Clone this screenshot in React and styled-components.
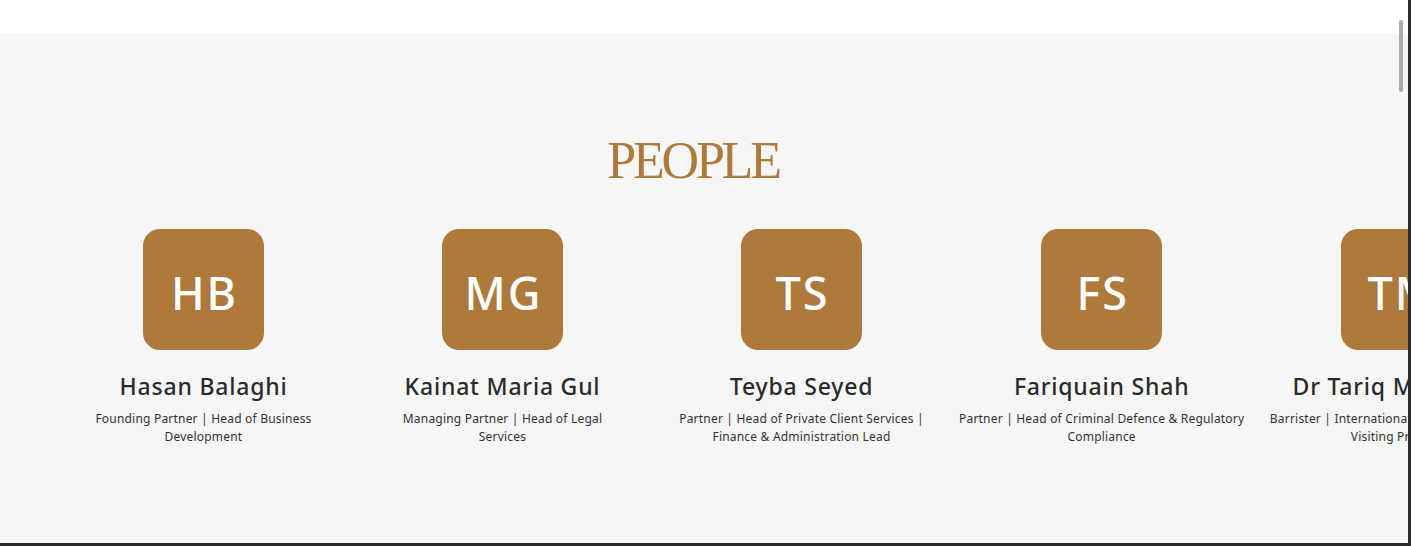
import React from 'react';
import styled, { createGlobalStyle } from 'styled-components';

const GlobalStyle = createGlobalStyle`
  html, body {
    margin: 0;
    padding: 0;
    background: #2b2b2b;
    overflow: hidden;
  }
`;

const Frame = styled.div`
  position: relative;
  width: 1408px;
  height: 543px;
  background: #ffffff;
  overflow: hidden;
  display: flex;
  flex-direction: column;
`;

const TopBar = styled.div`
  height: 34px;
  background: #ffffff;
  flex-shrink: 0;
`;

const Section = styled.section`
  flex: 1;
  background: #f6f6f6;
  padding-top: 97px;
`;

const Title = styled.h2`
  margin: 0 0 38px;
  padding-right: 22px;
  text-align: center;
  font-family: "Liberation Serif", serif;
  font-weight: 400;
  font-size: 52px;
  line-height: 60px;
  letter-spacing: -3.2px;
  color: #ad7a3b;
`;

const Track = styled.div`
  display: flex;
  padding-left: 54px;
  overflow: hidden;
`;

const Card = styled.div`
  flex: 0 0 299px;
  display: flex;
  flex-direction: column;
  align-items: center;
  padding: 0 8px;
  box-sizing: border-box;
  font-family: "Noto Sans", sans-serif;
`;

const Avatar = styled.div`
  width: 121px;
  height: 121px;
  box-sizing: border-box;
  padding-top: 5px;
  border-radius: 17px;
  background: #ad7a3b;
  color: #ffffff;
  display: flex;
  align-items: center;
  justify-content: center;
  font-size: 45px;
  font-weight: 500;
  letter-spacing: 2px;
  text-indent: 2px;
`;

const Name = styled.h3`
  margin: 22px 0 10px;
  font-size: 23px;
  line-height: 28px;
  font-weight: 500;
  letter-spacing: 0.8px;
  color: #2a2a2a;
  white-space: nowrap;
`;

const Role = styled.p`
  margin: 0;
  font-size: 12px;
  line-height: 18px;
  color: #333333;
  text-align: center;
  letter-spacing: 0.2px;
  white-space: nowrap;
`;

const Scrollbar = styled.div`
  position: absolute;
  top: 20px;
  right: 5px;
  width: 4px;
  height: 72px;
  border-radius: 2px;
  background: #ababab;
`;

const people = [
  { initials: 'HB', name: 'Hasan Balaghi', role: ['Founding Partner | Head of Business', 'Development'] },
  { initials: 'MG', name: 'Kainat Maria Gul', role: ['Managing Partner | Head of Legal', 'Services'] },
  { initials: 'TS', name: 'Teyba Seyed', role: ['Partner | Head of Private Client Services |', 'Finance & Administration Lead'] },
  { initials: 'FS', name: 'Fariquain Shah', role: ['Partner | Head of Criminal Defence & Regulatory', 'Compliance'] },
  { initials: 'TM', name: 'Dr Tariq Mahmood', role: ['Barrister | International Arbitration Adviser |', 'Visiting Professor'] },
];

export default function App() {
  return (
    <>
      <GlobalStyle />
      <Frame>
        <TopBar />
        <Section>
          <Title>PEOPLE</Title>
          <Track>
            {people.map((p) => (
              <Card key={p.initials}>
                <Avatar>{p.initials}</Avatar>
                <Name>{p.name}</Name>
                <Role>
                  {p.role[0]}
                  <br />
                  {p.role[1]}
                </Role>
              </Card>
            ))}
          </Track>
        </Section>
        <Scrollbar />
      </Frame>
    </>
  );
}
